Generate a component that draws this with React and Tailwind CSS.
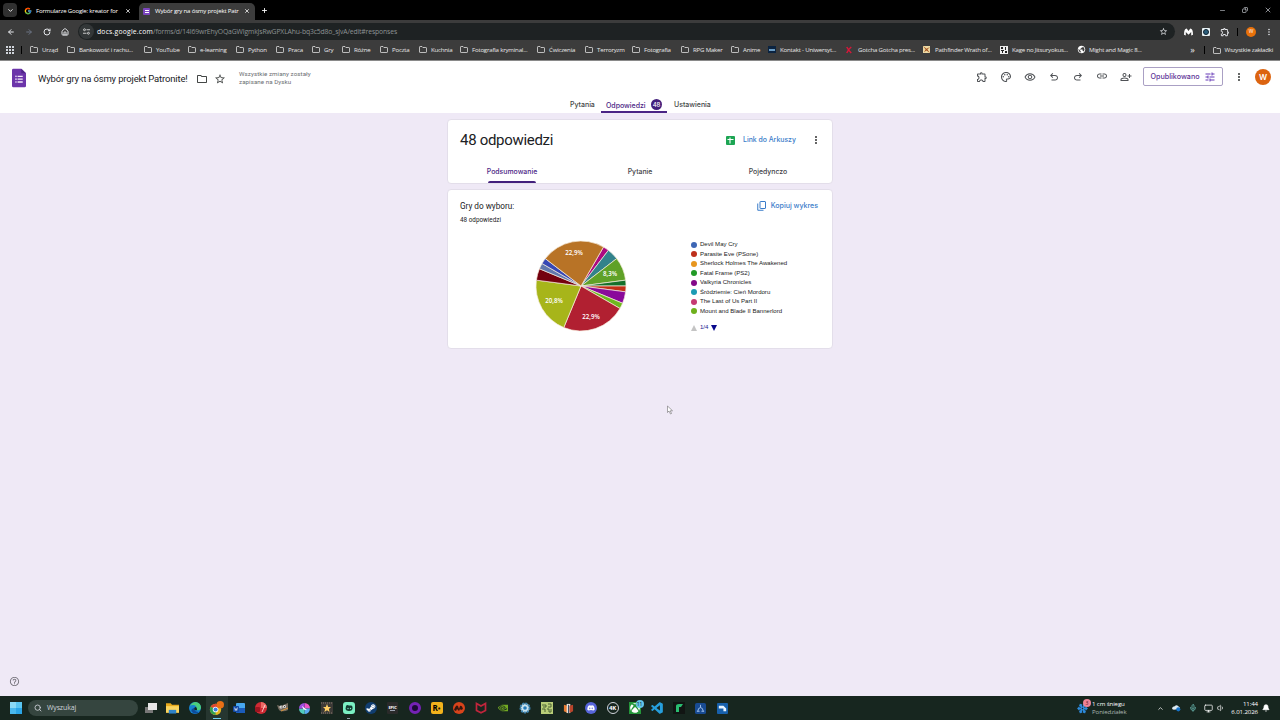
import {
  MdOutlineExtension, MdOutlinePalette, MdOutlineRemoveRedEye, MdLink, MdOutlinePersonAddAlt,
  MdTune, MdMoreVert, MdOutlineFolder, MdStarBorder, MdHelpOutline, MdPublic,
} from "react-icons/md";
import { FaSteamSymbol, FaXbox, FaDiscord } from "react-icons/fa";
import { FcGoogle } from "react-icons/fc";
import { BiLogoVisualStudio } from "react-icons/bi";
import { SiNvidia } from "react-icons/si";
import { ArrowLeft, ArrowRight, RotateCw, House, ChevronDown, ChevronUp, X, Plus, Minus, Copy, Search, Mic, Monitor, Volume1, Bell, Snowflake } from "lucide-react";

const bookmarks = [
  { name: "Urząd", w: "w-[37px]" },
  { name: "Bankowość i rachu...", w: "w-[77px]" },
  { name: "YouTube", w: "w-[44px]" },
  { name: "e-learning", w: "w-[48px]" },
  { name: "Python", w: "w-[40px]" },
  { name: "Praca", w: "w-[36px]" },
  { name: "Gry", w: "w-[30px]" },
  { name: "Różne", w: "w-[38px]" },
  { name: "Poczta", w: "w-[39px]" },
  { name: "Kuchnia", w: "w-[41px]" },
  { name: "Fotografia kryminal...", w: "w-[77px]" },
  { name: "Ćwiczenia", w: "w-[48px]" },
  { name: "Terroryzm", w: "w-[47px]" },
  { name: "Fotografia", w: "w-[49px]" },
  { name: "RPG Maker", w: "w-[50px]" },
  { name: "Anime", w: "w-[37px]" },
  { name: "Kontakt - Uniwersyt...", w: "w-[78px]", icon: "ukw" },
  { name: "Gotcha Gotcha pres...", w: "w-[77px]", icon: "x" },
  { name: "Pathfinder Wrath of...", w: "w-[77px]", icon: "path" },
  { name: "Kage no Jitsuryokus...", w: "w-[77px]", icon: "kage" },
  { name: "Might and Magic 8...", w: "w-[77px]", icon: "globe" },
];

// number of votes out of 48, clockwise, starting at 30 degrees
const slices = [
  { n: 1, color: "#ab0a80" },
  { n: 2, color: "#32828b" },
  { n: 4, color: "#5fa127" },
  { n: 1, color: "#15702b" },
  { n: 1, color: "#c32f18" },
  { n: 2, color: "#8a0a9b" },
  { n: 1, color: "#6fb81f" },
  { n: 11, color: "#b12031" },
  { n: 10, color: "#a7b51a" },
  { n: 2, color: "#74000e" },
  { n: 1, color: "#6278ad" },
  { n: 1, color: "#3747b5" },
  { n: 11, color: "#b87326" },
];

const legend = [
  { name: "Devil May Cry", color: "bg-[#3d66b4]" },
  { name: "Parasite Eve (PSone)", color: "bg-[#bd2f1b]" },
  { name: "Sherlock Holmes The Awakened", color: "bg-[#e7961f]" },
  { name: "Fatal Frame (PS2)", color: "bg-[#219a26]" },
  { name: "Valkyria Chronicles", color: "bg-[#830a88]" },
  { name: "Śródziemie: Cień Mordoru", color: "bg-[#1c9bb4]" },
  { name: "The Last of Us Part II", color: "bg-[#c53a72]" },
  { name: "Mount and Blade II Bannerlord", color: "bg-[#6eb01c]" },
];

function FolderIcon({ className }) {
  return (
    <svg viewBox="0 0 16 14" className={className} fill="none" stroke="currentColor" strokeWidth="1.5">
      <path d="M1 12V2.2Q1 1 2.2 1H6l1.8 2H13.8Q15 3 15 4.2V11.8Q15 13 13.8 13H2.2Q1 13 1 12Z" />
    </svg>
  );
}

function FormsIcon({ className }) {
  return (
    <svg viewBox="0 0 30 40" className={className}>
      <path d="M3 0H20L30 10V37Q30 40 27 40H3Q0 40 0 37V3Q0 0 3 0Z" fill="#6c35aa" />
      <path d="M20 0L30 10H20Z" fill="#4f2489" />
      <g fill="#f3eafa">
        <circle cx="8.5" cy="16.5" r="1.7" />
        <circle cx="8.5" cy="22.5" r="1.7" />
        <circle cx="8.5" cy="28.5" r="1.7" />
        <path d="M12 15h11v3H12zM12 21h11v3H12zM12 27h11v3H12z" />
      </g>
    </svg>
  );
}

function BookmarkIcon({ icon }) {
  if (icon === "ukw") {
    return (
      <div className="w-2 h-[7px] bg-[#0b2340] flex items-center justify-center">
        <div className="w-[6px] h-[2px] bg-[#6a9cc4]"></div>
      </div>
    );
  }
  if (icon === "x") {
    return (
      <svg viewBox="0 0 8 10" className="w-[6px] h-2" fill="none" stroke="#d8173a" strokeWidth="2">
        <path d="M1 1Q3 5 7 9M7 1Q3 4 1 9" />
      </svg>
    );
  }
  if (icon === "path") {
    return (
      <svg viewBox="0 0 8 8" className="w-[7px] h-[7px]">
        <rect width="8" height="8" fill="#ecd9a4" />
        <path d="M0 0L4 3L8 1L5 4L8 8L4 5L1 7L3 4Z" fill="#a4501d" />
      </svg>
    );
  }
  if (icon === "kage") {
    return (
      <svg viewBox="0 0 8 8" className="w-2 h-2">
        <rect width="8" height="8" fill="#eee" />
        <path d="M1 1h2v2H1zM5 1h1v3H5zM1 4h3v1H1zM2 5h1v2H2zM5 5h2v2H5z" fill="#222" />
      </svg>
    );
  }
  return <MdPublic className="w-[9px] h-[9px] text-white" />;
}

function TabStrip() {
  return (
    <div className="h-5 bg-black flex items-end text-white text-[6.1px] tracking-[-0.2px]">
      <div className="ml-[3px] mb-[3px] w-[14px] h-[14px] rounded-[4px] bg-[#303030] flex items-center justify-center">
        <ChevronDown className="w-[7px] h-[7px]" strokeWidth={3} />
      </div>
      <div className="ml-[7px] h-[19px] w-[108px] flex items-center">
        <FcGoogle className="w-[8px] h-[8px]" />
        <span className="ml-1 w-[84px] whitespace-nowrap">Formularze Google: kreator for</span>
        <X className="ml-[5px] w-[6px] h-[6px]" strokeWidth={3} />
      </div>
      <div className="ml-[7px] h-[17px] w-[116px] rounded-t-[5px] bg-[#3c3c3c] flex items-center pb-px">
        <div className="ml-[4px] w-[7px] h-[7px] bg-[#7b45bd] rounded-[1px] flex flex-col items-center justify-center gap-px">
          <div className="w-[4px] h-px bg-white"></div>
          <div className="w-[4px] h-px bg-white"></div>
        </div>
        <span className="ml-[5px] w-[84px] whitespace-nowrap">Wybór gry na ósmy projekt Patr</span>
        <X className="ml-[5px] w-[6px] h-[6px]" strokeWidth={3} />
      </div>
      <Plus className="ml-[6px] mb-[6px] w-[7px] h-[7px]" strokeWidth={3} />
      <div className="ml-auto h-5 flex items-center text-gray-300">
        <Minus className="w-[7px] h-[7px] mr-[16px]" />
        <Copy className="w-[6px] h-[6px] mr-[16px] -scale-x-100" strokeWidth={2.5} />
        <X className="w-[8px] h-[8px] mr-[8px]" />
      </div>
    </div>
  );
}

function AddressRow() {
  return (
    <div className="h-5 bg-[#3c3c3c] flex items-center text-gray-200 pt-[3px]">
      <ArrowLeft className="ml-[7px] w-[8px] h-[8px]" strokeWidth={3} />
      <ArrowRight className="ml-[10px] w-[8px] h-[8px] text-gray-500" strokeWidth={3} />
      <RotateCw className="ml-[10px] w-[8px] h-[8px]" strokeWidth={3} />
      <House className="ml-[10px] w-[8px] h-[8px]" strokeWidth={3} />
      <div className="ml-[9px] w-[1097px] h-[17px] rounded-full bg-[#1e2223] flex items-center">
        <div className="ml-[1px] w-[15px] h-[15px] rounded-full bg-[#333738] flex items-center justify-center">
          <svg viewBox="0 0 8 8" className="w-[7px] h-[7px]" fill="none" stroke="#ddd" strokeWidth="1">
            <circle cx="1.7" cy="2" r="1.1" />
            <path d="M4 2h4M0 6h4" />
            <circle cx="6.2" cy="6" r="1.1" />
          </svg>
        </div>
        <span className="ml-[3px] pt-[2px] text-[6.8px] whitespace-nowrap text-[#8d9293] tracking-[-0.13px]">
          <span className="text-white tracking-[0.2px]">docs.google.com</span>/forms/d/14I69wrEhyOQaGWIgmkJsRwGPXLAhu-bq3c5d8o_sJvA/edit#responses
        </span>
        <MdStarBorder className="ml-auto mr-[7px] w-[9px] h-[9px]" />
      </div>
      <svg viewBox="0 0 10 8" className="ml-[9px] w-[9px] h-[8px]" fill="#fff">
        <path d="M0 7Q0 0 3 0L5 3L7 0Q10 0 10 7L8 8V4L5 7L2 4V8Z" />
      </svg>
      <div className="ml-[9px] w-[8px] h-[8px] rounded-[1px] bg-[#e9f2f5] flex items-center justify-center">
        <div className="w-[6px] h-[6px] rounded-full bg-[#2c5f7c] border-[1.5px] border-[#0f2433]"></div>
      </div>
      <MdOutlineExtension className="ml-[10px] w-[10px] h-[10px]" />
      <div className="ml-[7px] w-px h-2 bg-black"></div>
      <div className="ml-[8px] w-[10px] h-[10px] rounded-full bg-[#e8710a] text-[5px] text-white flex items-center justify-center">W</div>
      <MdMoreVert className="ml-[8px] w-[10px] h-[10px]" />
    </div>
  );
}

function BookmarksBar() {
  return (
    <div className="h-[21px] bg-[#3c3c3c] border-b border-[#8a8a8a] flex items-center text-[#e8e8e8] text-[6.1px] whitespace-nowrap tracking-[-0.2px]">
      <div className="ml-[6px] grid grid-cols-3 gap-px w-[8px]">
        {Array.from({ length: 9 }, (_, i) => (
          <div key={i} className="h-[2px] bg-gray-300"></div>
        ))}
      </div>
      <div className="ml-[7px] mr-[8px] w-px h-2 bg-black"></div>
      {bookmarks.map((b) => (
        <div key={b.name} className={`${b.w} shrink-0 flex items-center`}>
          <div className="w-[12px] shrink-0">
            {b.icon ? <BookmarkIcon icon={b.icon} /> : <FolderIcon className="w-[8px] h-[7px]" />}
          </div>
          <span>{b.name}</span>
        </div>
      ))}
      <span className="ml-auto text-[9px] leading-none pb-0.5">»</span>
      <div className="ml-[9px] w-px h-2 bg-black"></div>
      <FolderIcon className="ml-[8px] w-[8px] h-[7px]" />
      <span className="ml-[4px] mr-[7px]">Wszystkie zakładki</span>
    </div>
  );
}

function UndoIcon({ className }) {
  return (
    <svg viewBox="0 -960 960 960" className={className} fill="currentColor">
      <path d="M280-200v-80h284q63 0 109.500-40T720-420q0-60-46.500-100T564-560H312l104 104-56 56-200-200 200-200 56 56-104 104h252q97 0 166.500 63T800-420q0 94-69.500 157T564-200H280Z" />
    </svg>
  );
}

function CopyChartIcon({ className }) {
  return (
    <svg viewBox="0 0 18 20" className={className} fill="none" stroke="currentColor" strokeWidth="2">
      <rect x="6" y="1" width="11" height="14" rx="1" />
      <path d="M1.500 5V18.500H13" />
    </svg>
  );
}

function FormHeader() {
  return (
    <header className="h-[52px] bg-white text-[#444746] font-['Inter','Roboto',sans-serif]">
      <div className="h-[35px] flex items-center">
        <FormsIcon className="ml-[12px] mb-[2px] w-[14px] h-[20px]" />
        <h1 className="ml-3 w-[158px] pt-px text-[9.5px] text-[#202124] whitespace-nowrap tracking-[-0.16px] font-['Roboto',sans-serif]">Wybór gry na ósmy projekt Patronite!</h1>
        <MdOutlineFolder className="w-[12px] h-[12px]" />
        <MdStarBorder className="ml-[6px] w-[12px] h-[12px]" />
        <p className="ml-[13px] mb-px text-[6.2px] leading-[8px] text-[#6b6e72] font-['Roboto',sans-serif] tracking-[0.06px] whitespace-nowrap">
          Wszystkie zmiany zostały<br />zapisane na Dysku
        </p>
        <div className="ml-auto flex items-center gap-[12px] text-[#4f5256] pb-[4px]">
          <MdOutlineExtension className="w-[12px] h-[12px]" />
          <MdOutlinePalette className="w-[12px] h-[12px]" />
          <MdOutlineRemoveRedEye className="w-[12px] h-[12px]" />
          <UndoIcon className="w-[12px] h-[12px]" />
          <UndoIcon className="w-[12px] h-[12px] -scale-x-100" />
          <MdLink className="w-[12px] h-[12px] mb-0.5" />
          <MdOutlinePersonAddAlt className="w-[12px] h-[12px]" />
        </div>
        <button className="ml-[11px] mb-[4px] w-[80px] h-[19px] rounded-[2px] border border-[#aaa0c4] text-[#673ab7] flex items-center justify-center text-[7.2px] font-medium">
          <span className="w-[53px] pt-px text-left text-[#5c3296]">Opublikowano</span>
          <MdTune className="w-[12px] h-[12px]" />
        </button>
        <MdMoreVert className="ml-[10px] mb-[4px] w-[12px] h-[12px]" />
        <div className="ml-[10px] mr-[9px] mb-[4px] w-4 h-4 rounded-full bg-[#dc6410] text-white text-[8px] font-semibold flex items-center justify-center">W</div>
      </div>
      <nav className="h-[17px] flex text-[7px] font-medium whitespace-nowrap tracking-[-0.02px]">
        <span className="ml-[570px] w-[31px] leading-[17px]">Pytania</span>
        <div className="w-[66px] border-b-2 border-[#4b2585] text-[#4b2585] flex items-center justify-between px-[5px] pt-[2px]">
          <span className="leading-[13px] pt-px">Odpowiedzi</span>
          <span className="w-[11px] h-[11px] rounded-full bg-[#43207c] text-white text-[6px] tracking-tight flex items-center justify-center">48</span>
        </div>
        <span className="ml-[7px] leading-[17px]">Ustawienia</span>
      </nav>
    </header>
  );
}

function ResponsesCard() {
  return (
    <section className="w-[386px] h-[65px] bg-white rounded-[4px] border border-[#e3deea] flex flex-col">
      <div className="flex items-center h-[40px] pl-3 pr-[10px]">
        <h2 className="text-[15px] tracking-[-0.3px] text-[#202124] whitespace-nowrap font-['Roboto',sans-serif]">48 odpowiedzi</h2>
        <svg viewBox="0 0 18 18" className="ml-auto w-[9px] h-[9px]">
          <rect width="18" height="18" rx="2" fill="#1ca553" />
          <path d="M8 3v12M3 7h12" stroke="#fff" strokeWidth="2.2" />
        </svg>
        <span className="ml-2 pt-px w-[54px] text-[6.9px] font-medium text-[#3a7cc9] whitespace-nowrap">Link do Arkuszy</span>
        <MdMoreVert className="ml-[13px] w-[12px] h-[12px] text-[#444]" />
      </div>
      <div className="grid grid-cols-3 flex-1 text-[6.9px] font-medium text-[#3f4246] text-center">
        <div className="flex flex-col items-center justify-between pt-[7px] text-[#4b2585]">
          <span className="leading-[10px]">Podsumowanie</span>
          <div className="w-[48px] h-[2px] bg-[#43207c] rounded-t-sm"></div>
        </div>
        <span className="pt-[7px] leading-[10px]">Pytanie</span>
        <span className="pt-[7px] leading-[10px]">Pojedynczo</span>
      </div>
    </section>
  );
}

function PieChart() {
  const r = 45;
  const point = (deg) => {
    const a = (deg * Math.PI) / 180;
    return `${(r * Math.sin(a)).toFixed(2)} ${(-r * Math.cos(a)).toFixed(2)}`;
  };
  let angle = 30;
  const paths = slices.map((s) => {
    const start = angle;
    angle += s.n * 7.5;
    return { color: s.color, d: `M0 0L${point(start)}A${r} ${r} 0 0 1 ${point(angle)}Z` };
  });
  return (
    <svg viewBox="-46 -46 92 92" className="w-[92px] h-[92px]">
      {paths.map((p, i) => (
        <path key={i} d={p.d} fill={p.color} stroke="#f6ecdc" strokeWidth="0.7" />
      ))}
      <g fill="#fff" fontSize="6.2" fontWeight="600" textAnchor="middle" fontFamily="Open Sans, sans-serif">
        <text x="-7" y="-31">22,9%</text>
        <text x="29" y="-10">8,3%</text>
        <text x="-27" y="17">20,8%</text>
        <text x="10" y="33">22,9%</text>
      </g>
    </svg>
  );
}

function QuestionCard() {
  return (
    <section className="mt-[5px] w-[386px] h-[160px] bg-white rounded-[4px] border border-[#e3deea]">
      <div className="flex justify-between pl-3 pr-[14px] pt-[9px]">
        <div className="font-['Roboto',sans-serif] text-[#202124] whitespace-nowrap">
          <h3 className="text-[8.2px] leading-[14px]">Gry do wyboru:</h3>
          <p className="text-[6.3px] leading-[14px] tracking-[0.02px]">48 odpowiedzi</p>
        </div>
        <div className="flex items-center h-[13px] text-[#3a7cc9] text-[7.05px] font-medium whitespace-nowrap">
          <CopyChartIcon className="w-[9px] h-[10px] mr-[5px]" />
          <span className="pt-px">Kopiuj wykres</span>
        </div>
      </div>
      <div className="flex mt-[13px]">
        <div className="ml-[87px]">
          <PieChart />
        </div>
        <div className="ml-[64px] text-[6.05px] text-[#222] font-['Liberation_Sans',Arial,sans-serif]">
          {legend.map((item) => (
            <div key={item.name} className="h-[9.5px] flex items-center whitespace-nowrap">
              <span className={`w-[6px] h-[6px] rounded-full mr-[3px] ${item.color}`}></span>
              {item.name}
            </div>
          ))}
          <div className="mt-[7px] h-[10px] flex items-center text-[#1a1a90]">
            <svg viewBox="0 0 6 6" className="w-[6px] h-[6px]"><path d="M3 0L6 6H0Z" fill="#c4c4c4" /></svg>
            <span className="mx-[3px]">1/4</span>
            <svg viewBox="0 0 6 6" className="w-[6px] h-[6px]"><path d="M0 0H6L3 6Z" fill="#08088c" /></svg>
          </div>
        </div>
      </div>
    </section>
  );
}

// pinned programs, in taskbar order
const apps = [
  <svg viewBox="0 0 12 12" className="w-3 h-3">
    <rect x="0" y="5" width="8" height="6" fill="#777" />
    <rect x="3" y="1" width="9" height="7" fill="#e7e7e7" />
  </svg>,
  <svg viewBox="0 0 14 12" className="w-[13px] h-[12px]">
    <path d="M0 1h5l1.500 1.500H14V11H0Z" fill="#e7a91c" />
    <path d="M0 4h14v7H0Z" fill="#fbd55f" />
    <path d="M3 8h8v4H3Z" fill="#2f83c8" />
  </svg>,
  <svg viewBox="0 0 12 12" className="w-3 h-3">
    <circle cx="6" cy="6" r="6" fill="#1683d0" />
    <path d="M1 4Q3 0 7 0Q12 1 12 6Q11 9 8 8Q8 3 4 3Q2 3 1 4Z" fill="#4ccf7c" />
    <path d="M5 6Q5 10 10 10Q6 13 3 10Q1 7 5 6Z" fill="#0d4b9b" />
    <path d="M6 5Q8 5 8 8Q6 9 5 7Z" fill="#12281f" />
  </svg>,
  <svg viewBox="0 0 16 16" className="w-[15px] h-[15px]">
    <circle cx="7" cy="9" r="6" fill="#e3b51f" />
    <path d="M7 9L1.800 6A6 6 0 0 1 12.200 6Z" fill="#dd4433" />
    <path d="M7 9L1.800 6A6 6 0 0 0 7 15Z" fill="#30a050" />
    <circle cx="7" cy="9" r="3" fill="#fff" />
    <circle cx="7" cy="9" r="2.2" fill="#3e7de0" />
    <circle cx="12" cy="4" r="4" fill="#e86f16" />
  </svg>,
  <svg viewBox="0 0 12 12" className="w-[12px] h-[12px]">
    <rect x="3" y="1" width="9" height="10" rx="1" fill="#47a7ee" />
    <path d="M3 6h9v5H3Z" fill="#1b5cba" />
    <rect x="0" y="4" width="6" height="6" rx="1" fill="#134aa5" />
    <path d="M1.500 5.500L2.300 8.500L3 6.500L3.700 8.500L4.500 5.500" stroke="#fff" strokeWidth=".6" fill="none" />
  </svg>,
  <svg viewBox="0 0 12 12" className="w-[12px] h-[12px]">
    <circle cx="6" cy="6" r="6" fill="#cf2a33" />
    <path d="M6 0V6H12A6 6 0 0 0 6 0Z" fill="#ee6a66" />
    <rect x="0" y="5" width="5" height="5" rx="1" fill="#9c1520" />
    <path d="M7 10L10 3" stroke="#fff" strokeWidth=".7" />
  </svg>,
  <svg viewBox="0 0 12 12" className="w-[12px] h-[12px]">
    <path d="M0 3L3 4L6 3L11 1L11 8Q8 10 3 9Q1 7 0 3Z" fill="#766c60" />
    <circle cx="4" cy="5" r="1.5" fill="#eee" />
    <circle cx="7.5" cy="4.6" r="1.5" fill="#eee" />
    <circle cx="4.2" cy="5" r=".6" fill="#222" />
    <circle cx="7.6" cy="4.7" r=".6" fill="#222" />
    <path d="M4 9L11 6" stroke="#d7953c" />
  </svg>,
  <svg viewBox="0 0 12 12" className="w-[11px] h-[11px]">
    <path d="M6 0A6 6 0 0 1 12 6H6Z" fill="#ed55c6" />
    <path d="M12 6A6 6 0 0 1 6 12V6Z" fill="#59a8f0" />
    <path d="M6 12A6 6 0 0 1 0 6H6Z" fill="#52cbbd" />
    <path d="M0 6A6 6 0 0 1 6 0V6Z" fill="#a14be0" />
    <path d="M3 3L9 8L5 7Z" fill="#fff" />
  </svg>,
  <svg viewBox="0 0 12 12" className="w-[12px] h-[12px]">
    <rect width="12" height="12" fill="#3c3a37" />
    <path d="M0 1h12M0 11h12" stroke="#877d6e" strokeDasharray="1 1" />
    <path d="M6 2L7.200 4.900L10 5L7.900 7L8.600 10L6 8.300L3.400 10L4.100 7L2 5L4.800 4.900Z" fill="#ffd166" />
  </svg>,
  <svg viewBox="0 0 12 12" className="w-[12px] h-[12px]">
    <rect width="12" height="12" rx="3" fill="#7bf0c3" />
    <path d="M3 4Q4 2.500 6 3.500H8.500Q10 4 9.500 7Q9 9 6 9Q3 9 2.500 7Z" fill="#123b31" />
    <circle cx="5" cy="6.5" r=".7" fill="#7bf0c3" />
    <circle cx="7.5" cy="6.5" r=".7" fill="#7bf0c3" />
  </svg>,
  <div className="w-[12px] h-[12px] rounded-full bg-[#103d70] flex items-center justify-center text-white">
    <FaSteamSymbol className="w-[10px] h-[10px]" />
  </div>,
  <div className="w-[11px] h-[12px] rounded-[1px] bg-[#2a2a2a] text-white text-[4px] leading-[5px] font-bold flex flex-col items-center justify-center tracking-[-0.1px]">
    EPIC
    <div className="w-[5px] h-px bg-gray-400"></div>
  </div>,
  <div className="w-[12px] h-[12px] rounded-full border-[3px] border-[#7522b5] bg-[#1b0a35]"></div>,
  <div className="w-[12px] h-[12px] rounded-[2px] bg-[#f2b21c] text-black text-[8px] leading-[12px] font-bold flex justify-center">
    R<span className="text-[5px] leading-[15px]">*</span>
  </div>,
  <svg viewBox="0 0 12 12" className="w-[12px] h-[12px]">
    <circle cx="6" cy="6" r="6" fill="#d8431b" />
    <path d="M1 8Q3 2 5 4L6 7L7 4Q9 3 10 7L8 8L7 7L6 9L4 7L3 9Z" fill="#34150d" />
  </svg>,
  <svg viewBox="0 0 12 12" className="w-[12px] h-[12px]">
    <path d="M1.500 1.500L6 4L10.500 1.500V8.500L6 10.800L1.500 8.500Z" fill="none" stroke="#c2253c" strokeWidth="1.7" />
  </svg>,
  <SiNvidia className="w-[10px] h-[10px] text-[#72a823]" />,
  <svg viewBox="0 0 12 12" className="w-[12px] h-[12px]">
    <circle cx="6" cy="6" r="4.5" fill="#c8e3ef" stroke="#3c83b0" strokeWidth="2" strokeDasharray="2 1" />
    <circle cx="6" cy="6" r="1.8" fill="#227abb" />
  </svg>,
  <svg viewBox="0 0 12 12" className="w-[12px] h-[12px]">
    <rect width="12" height="12" fill="#b9cd78" />
    <path d="M1 3h4v2H2M7 2h3v3H7M1 7h3v3M6 7h2v3h2M10 7v3" stroke="#4c6534" fill="none" />
  </svg>,
  <svg viewBox="0 0 12 12" className="w-[11px] h-[11px]">
    <path d="M1 2L5 3V11L1 9Z" fill="#e77b31" />
    <path d="M4 1h4v10H4Z" fill="#e8e3dc" />
    <path d="M7 3L11 2V9L7 11Z" fill="#b8452c" />
    <path d="M6 2v9" stroke="#27435c" />
  </svg>,
  <div className="w-[12px] h-[12px] rounded-full bg-[#5765da] text-white flex items-center justify-center"><FaDiscord className="w-2 h-2" /></div>,
  <div className="w-[12px] h-[12px] rounded-full border border-gray-300 text-white text-[6px] tracking-[-0.2px] font-bold flex items-center justify-center">4K</div>,
  <div className="relative w-[12px] h-[12px] bg-[#24963a] text-white flex items-center justify-center">
    <FaXbox className="w-[10px] h-[10px]" />
    <span className="absolute -top-[2px] -right-[3px] w-[8px] h-[8px] rounded-full bg-[#62c5e9] text-[5px] leading-[8px] text-center text-black">11</span>
  </div>,
  <BiLogoVisualStudio className="w-[14px] h-[14px] text-[#269fdc]" />,
  <svg viewBox="0 0 12 12" className="w-[12px] h-[12px]">
    <rect width="12" height="12" fill="#111513" />
    <path d="M3 10V4Q3 2 6 2H10L8 5H6V10Z" fill="#29bd70" />
  </svg>,
  <svg viewBox="0 0 12 12" className="w-[11px] h-[11px]">
    <rect width="12" height="12" rx="2" fill="#184b92" />
    <path d="M6 2V5M3 9L4 6Q6 4 8 6L9 9M2 9H5M7 9H10" stroke="#a5c5ed" fill="none" />
  </svg>,
  <svg viewBox="0 0 12 12" className="w-[11px] h-[11px]">
    <rect width="12" height="12" rx="1" fill="#1760ab" />
    <path d="M2 3H7L10 6V9H7V6H2Z" fill="#eaf5ff" />
  </svg>,
];

function Taskbar() {
  return (
    <footer className="h-6 shrink-0 bg-[#17261f] flex items-center text-white">
      <div className="ml-[10px] grid grid-cols-2 gap-[0.5px] w-3 h-3">
        <div className="bg-[#8ad9f5]"></div>
        <div className="bg-[#5ac5f0]"></div>
        <div className="bg-[#49b8ed]"></div>
        <div className="bg-[#2ba5e6]"></div>
      </div>
      <div className="ml-[6px] w-[110px] h-4 rounded-full bg-[#35453f] flex items-center text-[6.9px] tracking-[-0.08px] text-gray-300">
        <Search className="ml-[6px] mr-[5px] w-[8px] h-[8px]" strokeWidth={2.5} />
        Wyszukaj
      </div>
      <div className="ml-[1.5px] flex h-6">
        {apps.map((app, i) => (
          <div key={i} className={i === 3 ? "w-[22px] relative bg-[#263630] flex items-center justify-center" : "w-[22px] relative flex items-center justify-center"}>
            {app}
            {i === 3 && <div className="absolute bottom-[1px] w-2 h-px bg-[#72d0ee]"></div>}
            {i === 9 && <div className="absolute bottom-[1px] w-[3px] h-px bg-gray-400"></div>}
          </div>
        ))}
      </div>
      <div className="ml-auto flex items-center text-[6.1px] leading-[8px] whitespace-nowrap tracking-[-0.1px]">
        <div className="relative mr-[4px]">
          <Snowflake className="w-[11px] h-[11px] text-[#2e8bdd]" strokeWidth={3} />
          <span className="absolute -top-[4px] -right-[3px] w-[8px] h-[8px] rounded-full bg-[#ef8296] text-[5px] text-[#521321] text-center">3</span>
        </div>
        <div className="w-[65px]">
          1 cm śniegu
          <div className="text-[#a9b5af]">Poniedziałek</div>
        </div>
        <ChevronUp className="w-[7px] h-[7px] mr-[8px]" strokeWidth={2.5} />
        <svg viewBox="0 0 10 8" className="w-[9px] h-[8px] mr-[8px]">
          <path d="M2 6Q0 6 0 4Q1 2 3 2Q5 0 7 2Q9 3 9 5Z" fill="#dceaf4" />
          <circle cx="7" cy="5.5" r="2.3" fill="#1673ca" />
        </svg>
        <Mic className="w-[8px] h-[8px] mr-[7px] text-[#68b4ad]" strokeWidth={2.5} />
        <Monitor className="w-[9px] h-[9px] mr-[4px]" />
        <Volume1 className="w-[8px] h-[8px]" />
        <div className="w-[33px] text-right">
          11:44
          <div>6.01.2026</div>
        </div>
        <Bell className="ml-[4px] mr-[10px] w-[8px] h-[8px] fill-white" />
      </div>
    </footer>
  );
}

export default function App() {
  return (
    <div className="w-[1280px] h-[720px] overflow-hidden flex flex-col bg-[#efe9f6] font-['Open_Sans','Noto_Sans',sans-serif]">
      <TabStrip />
      <AddressRow />
      <BookmarksBar />
      <FormHeader />
      <main className="relative flex-1 flex flex-col items-center pt-[6px] font-['Inter','Roboto',sans-serif]">
        <ResponsesCard />
        <QuestionCard />
        <svg viewBox="0 0 12 18" className="absolute left-[667px] top-[292px] w-[6px] h-[10px]">
          <path d="M1 1V14L4 11L7 17L9 16L6.500 10.500H11Z" fill="#fff" stroke="#555" />
        </svg>
        <MdHelpOutline className="mt-auto mb-[9px] mr-auto ml-[9px] w-[11px] h-[11px] text-[#77747d]" />
      </main>
      <Taskbar />
    </div>
  );
}
